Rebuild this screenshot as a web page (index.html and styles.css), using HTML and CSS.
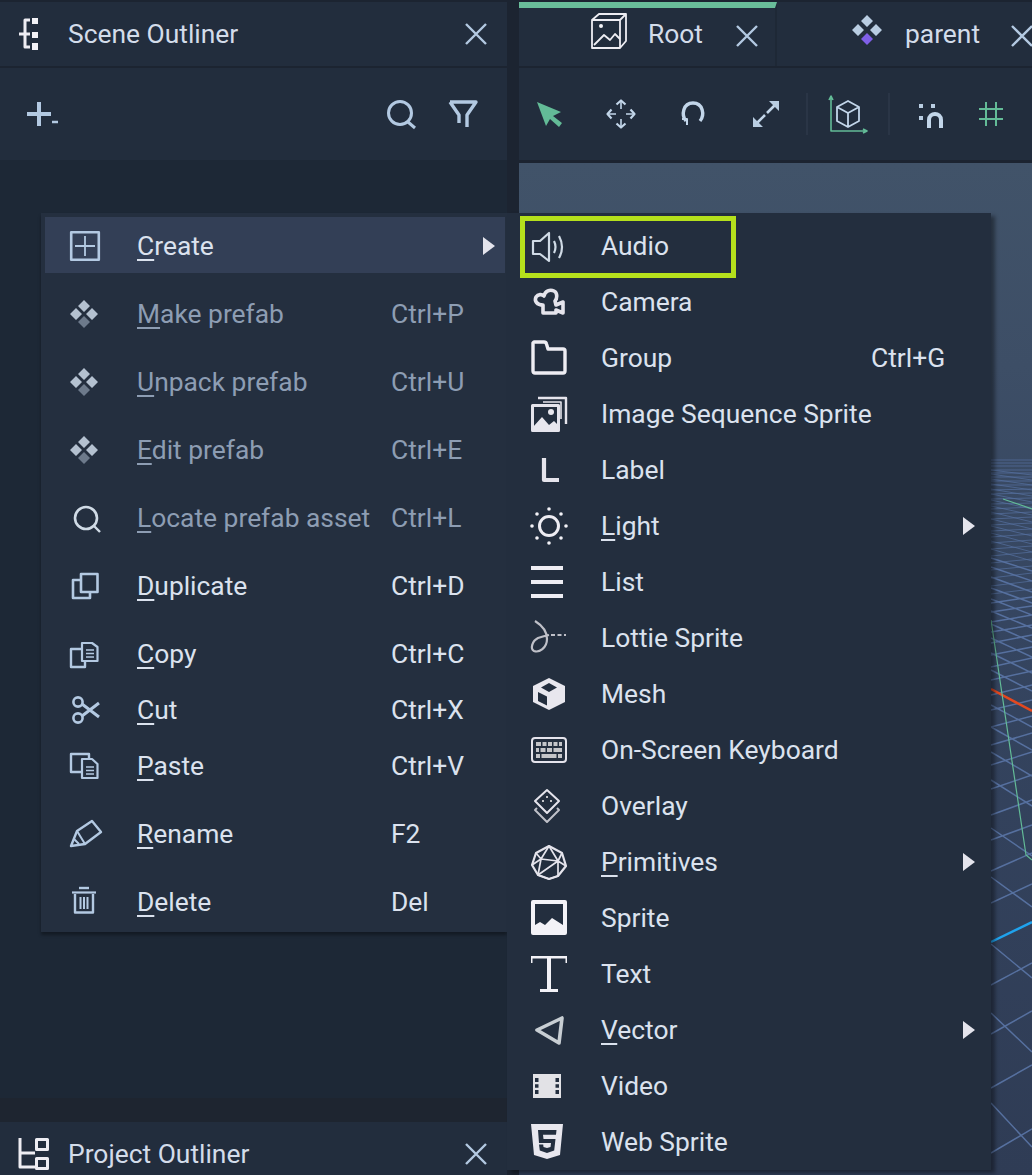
FILE: index.html
```html
<!DOCTYPE html>
<html lang="en">
<head>
<meta charset="utf-8">
<title>Scene Outliner</title>
<link rel="stylesheet" href="styles.css">
</head>
<body>
<div class="app">
  <section class="left">
    <header class="bar head">
      <svg class="ico s-white" viewBox="0 0 40 40"><path d="M12 6H7V33H12M1 20H12" stroke-width="3"/><path class="f-white" d="M14 4h6v6h-6zM14 18h6v6h-6zM14 29h6v7h-6z"/></svg>
      <span class="title">Scene Outliner</span>
      <svg class="ico close s-blue" viewBox="0 0 40 40"><path d="M10 10L30 30M30 10L10 30" stroke-width="2.4"/></svg>
    </header>
    <div class="bar tools left-tools">
      <svg class="ico s-blue" viewBox="0 0 40 40"><path d="M8 20H32M20 8V32" stroke-width="4"/><path d="M33 28H39" stroke-width="2.5"/></svg>
      <span class="grow"></span>
      <svg class="ico s-blue" viewBox="0 0 40 40"><circle cx="20" cy="19" r="11.5" stroke-width="3"/><path d="M28 28L35 34" stroke-width="3"/></svg>
      <svg class="ico s-blue" viewBox="0 0 40 40"><path d="M7 8H33L24 21V33M7 8L16 21V29" stroke-width="3.4"/></svg>
    </div>
    <div class="tree"></div>
    <div class="tree-end"></div>
    <header class="bar head foot">
      <svg class="ico s-white" viewBox="0 0 40 40"><path d="M2 4V33H17M2 19H17" stroke-width="3"/><rect x="18.500" y="5.500" width="11" height="10" stroke-width="3"/><rect x="18.500" y="24.500" width="11" height="10" stroke-width="3"/></svg>
      <span class="title">Project Outliner</span>
      <svg class="ico close s-blue" viewBox="0 0 40 40"><path d="M10 10L30 30M30 10L10 30" stroke-width="2.4"/></svg>
    </header>
  </section>

  <section class="right">
    <nav class="bar tabs">
      <div class="tab active">
        <svg class="ico tab-ico s-white" viewBox="0 0 40 40"><path d="M3 9H31V37H3ZM3 9L10 3H37V30L31 37M31 9L37 3" stroke-width="1.8"/><path d="M5 34L15 24L21 29L26 23L31 28" stroke-width="1.8"/><circle cx="12" cy="15" r="2" class="f-white"/></svg>
        <span class="title">Root</span>
        <svg class="ico close s-blue" viewBox="0 0 40 40"><path d="M10 10L30 30M30 10L10 30" stroke-width="2.4"/></svg>
      </div>
      <div class="tab second">
        <svg class="ico tab-ico-b" viewBox="0 0 40 40"><path class="f-pale" d="M20 3L26 9L20 15L14 9ZM11 12L17 18L11 24L5 18ZM29 12L35 18L29 24L23 18Z"/><path class="f-violet" d="M20 21L26 27L20 33L14 27Z"/></svg>
        <span class="title">parent</span>
        <svg class="ico close s-blue" viewBox="0 0 40 40"><path d="M10 10L30 30M30 10L10 30" stroke-width="2.4"/></svg>
      </div>
    </nav>
    <div class="bar tools view-tools">
      <svg class="ico" viewBox="0 0 40 40"><path class="f-green" d="M8 8L32 18L24 22L33 29L30 33L21 25L17 32Z"/></svg>
      <svg class="ico s-pale" viewBox="0 0 40 40"><path d="M20 8V15M20 25V32M8 20H15M25 20H32" stroke-width="1.6"/><path d="M15.500 10.500L20 6.500L24.500 10.500M15.500 29.500L20 33.500L24.500 29.500M10.500 15.500L6.500 20L10.500 24.500M29.500 15.500L33.500 20L29.500 24.500" stroke-width="2.2"/></svg>
      <svg class="ico s-pale" viewBox="0 0 40 40"><path d="M13 27C8 21 10 9 20 9C30 9 32 21 27 27" stroke-width="3.4"/><path d="M9 25L14 25L14 31" stroke-width="2"/></svg>
      <svg class="ico s-pale shift-1" viewBox="0 0 40 40"><path d="M21 19L30 10M19 21L10 30" stroke-width="2.6"/><path class="f-pale" d="M23 7H33V17ZM7 23V33H17Z"/></svg>
      <i class="sep"></i>
      <svg class="ico" viewBox="0 0 40 40"><path class="s-green" d="M3 3V37H38M1 6L3 2L5 6M35 35L39 37L35 39" stroke-width="1.6"/><path class="s-pale" d="M20 7L31 13V27L20 33L9 27V13ZM9 13L20 19L31 13M20 19V33" stroke-width="1.8"/></svg>
      <i class="sep"></i>
      <svg class="ico shift-1" viewBox="0 0 40 40"><path class="f-pale" d="M8 10h4v4H8zM20 10h4v4h-4zM8 22h4v4H8z"/><path class="s-pale" d="M18 34V26C18 18 30 18 30 26V34" stroke-width="4"/></svg>
      <svg class="ico grid-btn s-green" viewBox="0 0 40 40"><path d="M15 8V32M25 8V32M8 15H32M8 25H32" stroke-width="2"/></svg>
    </div>
    <div class="viewport">
      <svg class="floor" viewBox="519 163 513 1012" preserveAspectRatio="none">
        <path class="gl gl-far" d="M991 594L1032 589M991 586L1032 581M991 578L1032 573M991 570L1032 566M991 563L1032 559M991 556L1032 552M991 549L1032 546M991 543L1032 540M991 537L1032 534M991 531L1032 529M991 525L1032 523M991 519L1032 517M991 514L1032 512M991 509L1032 507M991 504L1032 503M991 499L1032 498M991 494L1032 493M991 490L1032 489M991 485L1032 485M991 481L1032 481M991 477L1032 477M991 473L1032 473M991 470L1032 470M991 466L1032 466M991 463L1032 463M991 460L1032 460M991 549L1032 561M991 541L1032 552M991 533L1032 544M991 526L1032 536M991 519L1032 529M991 512L1032 522M991 506L1032 515M991 500L1032 509M991 494L1032 502M991 489L1032 496M991 484L1032 490M991 479L1032 485M991 474L1032 480M991 470L1032 475"/>
        <path class="gl" d="M991 1153L1032 1129M991 1088L1032 1065M991 1034L1032 1011M991 985L1032 963M991 903L1032 884M991 871L1032 853M991 840L1032 825M991 815L1032 800M991 789L1032 775M991 765L1032 752M991 745L1032 733M991 727L1032 716M991 710L1032 700M991 695L1032 685M991 680L1032 671M991 667L1032 658M991 655L1032 647M991 643L1032 635M991 632L1032 625M991 622L1032 615M991 612L1032 606M991 603L1032 597M991 1103L1032 1147M991 1013L1032 1052M991 944L1032 978M991 877L1032 907M991 828L1032 856M991 780L1032 806M991 752L1032 776M991 727L1032 750M991 705L1032 727M991 670L1032 691M991 653L1032 673M991 638L1032 657M991 624L1032 642M991 611L1032 628M991 599L1032 615M991 588L1032 603M991 577L1032 592M991 567L1032 581M991 558L1032 571"/>
        <path class="axis-red" d="M991 689L1032 711"/>
        <path class="axis-blue" d="M991 942L1032 922"/>
        <path class="axis-green" d="M991 620L1026 855L1032 860M1003 499L1032 509"/>
      </svg>
    </div>
  </section>

  <ul class="menu menu-main">
    <li class="row on">
      <svg class="ico s-blue" viewBox="0 0 40 40"><rect x="6.2" y="6.2" width="27.6" height="27.6" stroke-width="2.6"/><path d="M20 10V30M10 20H30" stroke-width="1.8"/></svg>
      <span><u>C</u>reate</span><span></span>
      <svg class="arrow" viewBox="0 0 14 18"><path d="M1 0L13 9L1 18Z"/></svg>
    </li>
    <li class="row off gap">
      <svg class="ico" viewBox="0 0 40 40"><path class="f-mute" d="M19 6L25 12L19 18L13 12ZM11 14L17 20L11 26L5 20ZM27 14L33 20L27 26L21 20Z"/><path class="f-dim" d="M19 22L25 28L19 34L13 28Z"/></svg>
      <span><u>M</u>ake prefab</span><span>Ctrl+P</span>
    </li>
    <li class="row off gap">
      <svg class="ico" viewBox="0 0 40 40"><path class="f-mute" d="M19 6L25 12L19 18L13 12ZM11 14L17 20L11 26L5 20ZM27 14L33 20L27 26L21 20Z"/><path class="f-dim" d="M19 22L25 28L19 34L13 28Z"/></svg>
      <span><u>U</u>npack prefab</span><span>Ctrl+U</span>
    </li>
    <li class="row off gap">
      <svg class="ico" viewBox="0 0 40 40"><path class="f-mute" d="M19 6L25 12L19 18L13 12ZM11 14L17 20L11 26L5 20ZM27 14L33 20L27 26L21 20Z"/><path class="f-dim" d="M19 22L25 28L19 34L13 28Z"/></svg>
      <span><u>E</u>dit prefab</span><span>Ctrl+E</span>
    </li>
    <li class="row off gap">
      <svg class="ico s-frost" viewBox="0 0 40 40"><circle cx="21" cy="20" r="11" stroke-width="2.6"/><path d="M29 28L35 34" stroke-width="2.4"/></svg>
      <span><u>L</u>ocate prefab asset</span><span>Ctrl+L</span>
    </li>
    <li class="row gap">
      <svg class="ico s-blue" viewBox="0 0 40 40"><path d="M15 14H8V32H25V26" stroke-width="2.6"/><rect x="16" y="8" width="16.5" height="18" stroke-width="2.6"/></svg>
      <span><u>D</u>uplicate</span><span>Ctrl+D</span>
    </li>
    <li class="row gap">
      <svg class="ico s-blue" viewBox="0 0 40 40"><path d="M17 15H6V33H20V28" stroke-width="2.4"/><path d="M17 9H27L32.5 13V27H17Z" stroke-width="2.2"/><path d="M21 16H29M21 19.5H29M21 23H29" stroke-width="1.4"/></svg>
      <span><u>C</u>opy</span><span>Ctrl+C</span>
    </li>
    <li class="row">
      <svg class="ico s-blue" viewBox="0 0 40 40"><circle cx="13" cy="12" r="4.6" stroke-width="2.6"/><circle cx="13" cy="28" r="4.6" stroke-width="2.6"/><path d="M17 14L34 27M17 26L34 13" stroke-width="3"/></svg>
      <span><u>C</u>ut</span><span>Ctrl+X</span>
    </li>
    <li class="row">
      <svg class="ico s-blue" viewBox="0 0 40 40"><path d="M24 13V8H6V26H17" stroke-width="2.4"/><path d="M17 13H27L32.5 18V32H17Z" stroke-width="2.2"/><path d="M21 21H29M21 24.5H29M21 28H29" stroke-width="1.4"/></svg>
      <span><u>P</u>aste</span><span>Ctrl+V</span>
    </li>
    <li class="row gap">
      <svg class="ico s-blue" viewBox="0 0 40 40"><path d="M6 32L12 17L27 7L36 18L20 30Z" stroke-width="2.4"/><path d="M12 17L20 30M9 25L14 30" stroke-width="2"/></svg>
      <span><u>R</u>ename</span><span>F2</span>
    </li>
    <li class="row gap">
      <svg class="ico s-blue" viewBox="0 0 40 40"><path d="M7 10.5H31" stroke-width="2.2"/><path d="M14 6H24" stroke-width="2.4"/><path d="M10 12V30.5H28V12" stroke-width="2.4"/><path d="M15.5 15V27M19 15V27M22.5 15V27" stroke-width="2"/></svg>
      <span><u>D</u>elete</span><span>Del</span>
    </li>
  </ul>

  <ul class="menu menu-sub">
    <li class="row audio">
      <svg class="ico s-frost" viewBox="0 0 40 40"><path d="M4 15H11L20 7V35L11 28H4Z" stroke-width="2.2"/><path d="M25 15Q28 21 25 27" stroke-width="2.2"/><path d="M30 10Q36 21 30 32" stroke-width="2.2"/></svg>
      <span>Audio</span><span></span>
    </li>
    <li class="row">
      <svg class="ico s-soft" viewBox="0 0 40 40"><path d="M14 23C8 23 5 19 7 15C9 12 13 12 15 14C16 9 21 7 25 9C29 11 28 17 26 19L27 23L34 20V31L27 28V31H14Z" stroke-width="3.6"/></svg>
      <span>Camera</span><span></span>
    </li>
    <li class="row">
      <svg class="ico s-white" viewBox="0 0 40 40"><path d="M5 4H15Q17 4 17.5 6L19 11H34Q36 11 36 13V33Q36 35 34 35H6Q4 35 4 33V5Z" stroke-width="3.4"/></svg>
      <span>Group</span><span>Ctrl+G</span>
    </li>
    <li class="row">
      <svg class="ico s-soft" viewBox="0 0 40 40"><path d="M9 4H37V30" stroke-width="2.4"/><path d="M14 8H32V25" stroke-width="1.6"/><rect x="3.5" y="11.5" width="26" height="25" stroke-width="3"/><path class="f-soft" d="M4 33L13 23L20 31L25 27L29 31V36H4Z"/><circle class="f-soft" cx="22" cy="18" r="3"/></svg>
      <span>Image Sequence Sprite</span><span></span>
    </li>
    <li class="row">
      <svg class="ico s-soft" viewBox="0 0 40 40"><path d="M15 8V30H30" stroke-width="4.2"/></svg>
      <span>Label</span><span></span>
    </li>
    <li class="row">
      <svg class="ico s-white" viewBox="0 0 40 40"><circle cx="20" cy="20" r="9.5" stroke-width="3"/><g class="f-white"><circle cx="20" cy="3" r="1.8"/><circle cx="20" cy="37" r="1.8"/><circle cx="3" cy="20" r="1.8"/><circle cx="37" cy="20" r="1.8"/><circle cx="8" cy="8" r="1.8"/><circle cx="32" cy="8" r="1.8"/><circle cx="8" cy="32" r="1.8"/><circle cx="32" cy="32" r="1.8"/></g></svg>
      <span><u>L</u>ight</span><span></span>
      <svg class="arrow" viewBox="0 0 14 18"><path d="M1 0L13 9L1 18Z"/></svg>
    </li>
    <li class="row">
      <svg class="ico s-white" viewBox="0 0 40 40"><path d="M2 6H34M2 20H34M2 34H34" stroke-width="4"/></svg>
      <span>List</span><span></span>
    </li>
    <li class="row">
      <svg class="ico s-gray" viewBox="0 0 40 40"><path d="M6 3C14 8 18 13 18 21C18 30 10 35 5 33C1 31 3 23 9 20C12 19 15 18 20 17" stroke-width="2.2"/><path d="M22 17H37" stroke-width="2" stroke-dasharray="4 2.5"/></svg>
      <span>Lottie Sprite</span><span></span>
    </li>
    <li class="row">
      <svg class="ico" viewBox="0 0 40 40"><path class="f-soft" fill-rule="evenodd" d="M20 4L36 12V28L20 36L4 28V12ZM20 9L12 13.5L20 18L28 13.5ZM9 18V27L18 31.5V22.5Z"/></svg>
      <span>Mesh</span><span></span>
    </li>
    <li class="row">
      <svg class="ico" viewBox="0 0 40 40"><rect class="s-soft" x="3" y="8" width="34" height="24" rx="3" stroke-width="2"/><path class="f-keys" d="M7 12h5v4H7zM13.500 12h4v4h-4zM19 12h4v4h-4zM24.500 12h4v4h-4zM30 12h3v4h-3zM7 18h3v4H7zM11.500 18h5v4h-5zM18 18h5v4h-5zM24.500 18h8.500v4h-8.500zM7 24h4v4H7zM12.500 24h15v4h-15zM29 24h4v4h-4z"/></svg>
      <span>On-Screen Keyboard</span><span></span>
    </li>
    <li class="row">
      <svg class="ico" viewBox="0 0 40 40"><path class="s-soft" d="M18 4L30 15L18 27L6 15Z" stroke-width="2"/><path class="s-gray" d="M8 22L6 24L18 36L30 24L28 22" stroke-width="2"/><path class="f-keys" d="M17 10h2v2h-2zM13 14h2v2h-2zM21 14h2v2h-2z"/></svg>
      <span>Overlay</span><span></span>
    </li>
    <li class="row">
      <svg class="ico s-soft" viewBox="0 0 40 40"><path d="M20 4L33 11L37 24L29 34L20 37L9 33L3 23L7 11Z" stroke-width="2.2"/><path d="M20 4L12 17L29 19L20 4M7 11L12 17L3 23M33 11L29 19L37 24M12 17L9 33L29 19L29 34M9 33L20 37L29 34" stroke-width="1.7"/></svg>
      <span><u>P</u>rimitives</span><span></span>
      <svg class="arrow" viewBox="0 0 14 18"><path d="M1 0L13 9L1 18Z"/></svg>
    </li>
    <li class="row">
      <svg class="ico" viewBox="0 0 40 40"><path class="f-white" fill-rule="evenodd" d="M4 2H36Q38 2 38 4V35Q38 37 36 37H4Q2 37 2 35V4Q2 2 4 2ZM6 6V27L11 24L16 27L23 20L34 27V6Z"/></svg>
      <span>Sprite</span><span></span>
    </li>
    <li class="row">
      <svg class="ico" viewBox="0 0 40 40"><path class="f-white" d="M2 2H38V9H36.500V4.500H22V35H29V38H11V35H18V4.500H3.500V9H2Z"/></svg>
      <span>Text</span><span></span>
    </li>
    <li class="row">
      <svg class="ico s-silver" viewBox="0 0 40 40"><path d="M8 20L33 8L30 33Z" stroke-width="3.6"/></svg>
      <span><u>V</u>ector</span><span></span>
      <svg class="arrow" viewBox="0 0 14 18"><path d="M1 0L13 9L1 18Z"/></svg>
    </li>
    <li class="row">
      <svg class="ico" viewBox="0 0 40 40"><path class="f-film" fill-rule="evenodd" d="M4 8H32V32H4ZM6 12V16H9.500V12ZM6 18.300V21.700H9.500V18.300ZM6 24V28H9.500V24ZM26.500 12V16H30V12ZM26.500 18.300V21.700H30V18.300ZM26.500 24V28H30V24Z"/></svg>
      <span>Video</span><span></span>
    </li>
    <li class="row">
      <svg class="ico" viewBox="0 0 40 40"><path class="f-soft" fill-rule="evenodd" d="M2 2H34L31 33L18 37L5 33ZM9 8L10 21H22L21.500 25L18 26L14.500 25L14.200 22.500H10L10.800 28.500L18 31L25.200 28.500L26.500 17H14.500L14 12.800H27L27.500 8Z"/></svg>
      <span>Web Sprite</span><span></span>
    </li>
  </ul>
</div>
</body>
</html>
```
FILE: styles.css
```css
* { box-sizing: border-box; }
html, body { margin: 0; padding: 0; height: 100%; background: #1c2431; }
body { font-family: Roboto, "Liberation Sans", sans-serif; overflow: hidden; }

.app {
  position: relative;
  width: 1032px;
  height: 1175px;
  display: grid;
  grid-template-columns: 507px 513px;
  column-gap: 12px;
  padding-top: 2px;
  overflow: hidden;
}

.left, .right { display: flex; flex-direction: column; min-height: 0; }
.bar { background: #222d3d; display: flex; align-items: center; flex: none; }
.grow { flex: 1; }
.title { font-size: 26.4px; color: #d3dcea; white-space: nowrap; }

.ico {
  display: block;
  width: 40px;
  height: 40px;
  flex: none;
  fill: none;
  stroke-linejoin: round;
}
.s-white { stroke: #eeedf3; }
.s-soft { stroke: #e5e4ec; }
.s-blue { stroke: #b3c9e2; }
.s-pale { stroke: #c3d6ea; }
.s-frost { stroke: #d0dbe6; }
.s-gray { stroke: #bfc0c8; }
.s-silver { stroke: #c8ced3; }
.s-green { stroke: #63bb97; }
.f-white { fill: #f3f2f7; stroke: none; }
.f-soft { fill: #e8e7ee; stroke: none; }
.f-pale { fill: #b9cde2; stroke: none; }
.f-violet { fill: #7f5fe8; }
.f-green { fill: #63bb97; }
.f-mute { fill: #b4c1d0; }
.f-dim { fill: #6d7a8b; }
.f-keys { fill: #c4c5c9; stroke: none; }
.f-film { fill: #e2e2e6; }

.head { height: 64px; padding-left: 18px; }
.head .title { margin-left: 10px; }
.head .close { margin-left: auto; margin-right: 11px; }
.left-tools { height: 92px; margin-top: 2px; padding: 0 24px 0 19px; gap: 23px; }
.tree { flex: 1; background: #1d2836; }
.tree-end { height: 24px; background: #1e2530; flex: none; }
.foot { margin-bottom: -11px; }

.tabs { height: 64px; background: #222d3d; }
.tab { height: 64px; display: flex; align-items: center; flex: none; }
.tab.active {
  width: 258px;
  padding: 0 0 6px 70px;
  border-top: 6px solid #69bd9a;
  border-right: 2px solid #1e2836;
}
.tab-ico { margin-top: -6px; }
.tab-ico-b { margin-top: -4px; }
.tab .close { margin-top: 4px; }
.tab.active .title { margin-left: 19px; }
.tab.active .close { margin-left: 24px; }
.tab.second { padding-left: 70px; }
.tab.second .title { margin-left: 18px; }
.tab.second .close { margin-left: 22px; }

.view-tools { height: 92px; margin-top: 2px; padding-left: 10px; gap: 32px; }
.sep { width: 2px; height: 42px; background: #2a3546; margin: 0 -12px; flex: none; }
.shift-1 { margin-left: 1px; }
.grid-btn { margin-left: -12px; }

.viewport {
  flex: 1;
  margin-top: 3px;
  min-height: 0;
  background: linear-gradient(#415369 0, #3d4e66 20%, #354560 45%, #2f3c55 100%);
}
.floor { display: block; width: 100%; height: 100%; fill: none; }
.gl { stroke: #56709f; stroke-width: 1.5; }
.gl-far { stroke-width: 1; opacity: .7; }
.axis-red { stroke: #e4481f; stroke-width: 2.5; }
.axis-blue { stroke: #1fa3ee; stroke-width: 2.5; }
.axis-green { stroke: #63bb97; stroke-width: 1.2; }

.menu {
  position: absolute;
  top: 213px;
  margin: 0;
  list-style: none;
  background: #232e3e;
  font-size: 26.4px;
  color: #dbe2ee;
}
.menu-main {
  left: 41px;
  width: 466px;
  padding: 4px 2px 3px 4px;
  background: #242f3f;
  box-shadow: 0 3px 3px rgba(0, 0, 0, .35);
}
.menu-sub {
  left: 507px;
  width: 484px;
  height: 957px;
  padding: 4px;
  box-shadow: 4px 3px 4px rgba(0, 0, 0, .4);
}
.row {
  display: grid;
  align-items: center;
  height: 56px;
  position: relative;
  white-space: nowrap;
  line-height: 58px;
}
.menu-main .row { grid-template-columns: 92px 254px 1fr 14px; padding-right: 9px; }
.menu-main .row .ico { margin-left: 20px; }
.menu-sub .row { grid-template-columns: 90px 270px 1fr 14px; padding-right: 11px; }
.menu-sub .row .ico { margin-left: 18px; }
.row.gap { margin-top: 12px; }
.row.on { background: #333f56; }
.row.off { color: #8d9db3; }
.row u { text-decoration-thickness: 2px; text-underline-offset: 4px; }
.arrow {
  grid-column: 4;
  width: 14px;
  height: 18px;
  display: block;
  fill: #e4e4ec;
}
.audio::after {
  content: "";
  box-sizing: border-box;
  position: absolute;
  left: 9px;
  top: -1px;
  width: 216px;
  height: 62px;
  border: 5px solid #b5e01c;
}
```
